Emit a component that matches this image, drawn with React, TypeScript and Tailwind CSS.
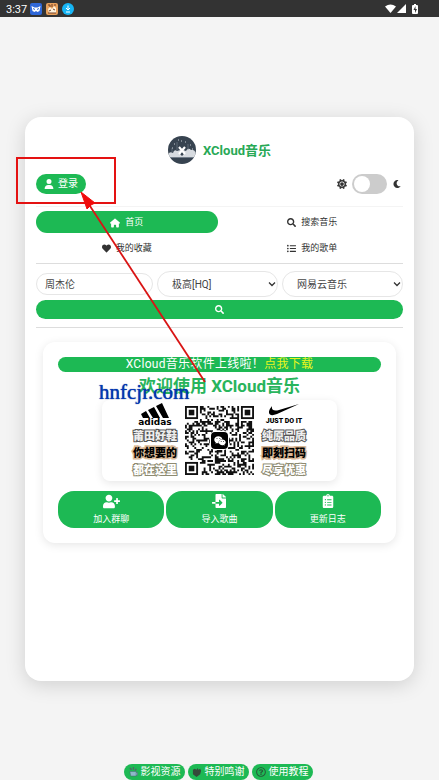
import React, { useState } from "react";
import {
  FaMoon, FaSearch, FaHeart, FaListUl,
  FaUserPlus, FaFileImport, FaClipboardList, FaRegQuestionCircle, FaWeixin,
} from "react-icons/fa";
import { FaHouse, FaUser, FaSun } from "react-icons/fa6";

const SIZE = 37;

function inFinder(x: number, y: number) {
  return (x < 8 && y < 8) || (x >= SIZE - 8 && y < 8) || (x < 8 && y >= SIZE - 8);
}

function qrPath() {
  let d = "";
  let seed = 91;
  for (let y = 0; y < SIZE; y++) {
    for (let x = 0; x < SIZE; x++) {
      seed = (seed * 1103515245 + 12345) % 2147483648;
      if (!inFinder(x, y) && (seed >> 12) % 100 < 46) d += `M${x} ${y}h1v1h-1z`;
    }
  }
  return d;
}

function QrCode() {
  const corners = [[0, 0], [SIZE - 7, 0], [0, SIZE - 7]];
  return (
    <div className="grid shrink-0 place-items-center">
      <svg viewBox="0 0 37 37" className="col-start-1 row-start-1 size-[69px]" role="img" aria-label="QR">
        <path d={qrPath()} fill="#111" />
        {corners.map(([x, y]) => (
          <g key={`${x}-${y}`}>
            <rect x={x + 0.5} y={y + 0.5} width="6" height="6" fill="#fff" stroke="#111" />
            <rect x={x + 2} y={y + 2} width="3" height="3" fill="#111" />
          </g>
        ))}
      </svg>
      <span className="col-start-1 row-start-1 grid size-[17px] place-items-center rounded-sm bg-black text-white ring-1 ring-white">
        <FaWeixin size={12} />
      </span>
    </div>
  );
}

function Slogans({ lines }: { lines: string[] }) {
  return (
    <div className="flex flex-col items-center pt-px text-[11px] leading-[17px] font-black">
      <span className="text-[#eee] [-webkit-text-stroke:2px_#555] [paint-order:stroke_fill]">{lines[0]}</span>
      <span className="text-black [-webkit-text-stroke:3px_#d9b896] [paint-order:stroke_fill]">{lines[1]}</span>
      <span className="text-white [-webkit-text-stroke:2px_#8d8a70] [paint-order:stroke_fill]">{lines[2]}</span>
    </div>
  );
}

function StatusBar() {
  return (
    <header className="flex h-[17px] items-center bg-[#333] pr-5 pl-1.5 text-white">
      <span className="w-6 pt-0.5 text-[11px] leading-4">3:37</span>
      <svg viewBox="0 0 12 12" className="size-3">
        <rect width="12" height="12" rx="2" fill="#2f67d8" />
        <path d="M1.5 3l3 1.5h3l3-1.5-1 5-2 1-1.5-1-1.5 1-2-1z" fill="#fff" />
        <path d="M3 5.5l2 1M9 5.5l-2 1" stroke="#2f67d8" />
      </svg>
      <svg viewBox="0 0 12 12" className="ml-1 size-3">
        <rect width="12" height="12" rx="2" fill="#e8a15c" />
        <path d="M2 6l2-2 2 2 2-3 2 2v5H3z" fill="#fff3dd" />
        <path d="M2 2h2v2M6 1v3M8 2h2M3 8l2-1M7 6l2 1M2 10h8" stroke="#754127" fill="none" />
      </svg>
      <svg viewBox="0 0 12 12" className="ml-1 size-3">
        <circle cx="6" cy="6" r="6" fill="#16b5f5" />
        <path d="M6 2.5v4M4 5l2 2 2-2M4 9h4" stroke="#fff" fill="none" />
      </svg>
      <svg viewBox="0 0 34 10" className="ml-auto h-2.5 w-[34px]" fill="#fff">
        <path d="M0 2.5Q5.5-1.5 11 2.5L5.500 9z" />
        <path d="M21 0v9h-9z" />
        <path d="M28 1h1V0h2v1h1q1 0 1 1v7q0 1-1 1h-4q-1 0-1-1V2q0-1 1-1z" />
        <path d="M30.500 2L28.500 6H30v3l2-4h-1.500z" fill="#333" />
      </svg>
    </header>
  );
}

function Logo() {
  return (
    <svg viewBox="0 0 28 28" className="size-7">
      <defs><clipPath id="disc"><circle cx="14" cy="14" r="14" /></clipPath></defs>
      <g clipPath="url(#disc)">
        <rect width="28" height="28" fill="#374350" />
        <path d="M0 18q2-3 5-1 1-4 4-2 5-2 9 0 2-4 5-1 3-1 5 3v4H0z" fill="#d7dbe0" />
        <path d="M0 21.500h28" stroke="#8e98a3" strokeWidth=".7" />
        <path d="M9 6v8M20 8v6M4 12v4" stroke="#7a8591" strokeWidth=".6" />
        <path d="M6 8h1M13 5h1M17 6h1M22 9h1M24 13h1M10 4h1M4 12h1" stroke="#c7ccd2" />
        <path d="M12 18l2-3 2 3-2 2z" fill="#374350" />
        <path d="M11 11l6 7M17 11l-6 7" stroke="#fff" strokeWidth="2.200" />
      </g>
    </svg>
  );
}

const tabs = [
  { label: "首页", icon: <FaHouse size={10} /> },
  { label: "搜索音乐", icon: <FaSearch size={9} /> },
  { label: "我的收藏", icon: <FaHeart size={9} /> },
  { label: "我的歌单", icon: <FaListUl size={9} /> },
];

const actions = [
  { label: "加入群聊", icon: <FaUserPlus size={17} /> },
  { label: "导入歌曲", icon: <FaFileImport size={14} /> },
  { label: "更新日志", icon: <FaClipboardList size={14} /> },
];

function Picker({ label, options }: { label: string; options: string[] }) {
  return (
    <div className="grid items-center">
      <select aria-label={label} className="col-start-1 row-start-1 h-[26px] w-full appearance-none rounded-full border border-[#e6e6e6] bg-white pl-3.5 text-[10px] text-[#444] outline-none">
        {options.map((o) => <option key={o}>{o}</option>)}
      </select>
      <svg viewBox="0 0 8 8" className="pointer-events-none col-start-1 row-start-1 mr-0.5 size-2 justify-self-end">
        <path d="M1 2.500l3 3 3-3" fill="none" stroke="#333" strokeWidth="1.300" />
      </svg>
    </div>
  );
}

export default function App() {
  const [active, setActive] = useState(0);
  const [dark, setDark] = useState(false);
  return (
    <div lang="zh-CN" className="relative flex min-h-screen flex-col overflow-hidden bg-[#f4f4f4] font-[Roboto,'Noto_Sans_CJK_SC',sans-serif] text-[#333]">
      <StatusBar />
      <main className="mx-[25px] mt-[100px] mb-[83px] flex-1 rounded-2xl bg-white px-[11px] pt-[19px] shadow-[0_4px_20px_rgba(0,0,0,0.15)]">
        <div className="flex items-center justify-center gap-[7px]">
          <Logo />
          <h1 className="pt-px text-[13px] font-bold text-[#28a956]">XCloud音乐</h1>
        </div>
        <div className="mt-2.5 flex h-5 items-center justify-between">
          <button className="flex h-5 items-center gap-1 rounded-full bg-[#1db954] px-2 text-[10px] leading-4 text-white">
            <FaUser size={10} />登录
          </button>
          <div className="flex items-center gap-[5px] pr-0.5">
            <FaSun size={10} />
            <label className="flex cursor-pointer">
              <input type="checkbox" aria-label="夜间模式" className="peer sr-only" checked={dark} onChange={() => setDark(!dark)} />
              <span className="flex h-5 w-[35px] items-center rounded-full bg-[#ccc] px-0.5 before:size-4 before:rounded-full before:bg-white peer-checked:justify-end peer-checked:bg-[#1db954]" />
            </label>
            <FaMoon size={8} className="ml-px" />
          </div>
        </div>
        <nav className="mt-3 grid grid-cols-2 gap-x-1 gap-y-1 border-t border-[#f4f4f4] border-b border-b-[#ddd] pt-1 pb-1">
          {tabs.map((t, i) => (
            <button
              key={t.label}
              onClick={() => setActive(i)}
              className={`flex h-[22px] items-center justify-center gap-[5px] rounded-full pt-px text-[9px] ${i === active ? "bg-[#1db954] text-white" : "text-[#333]"}`}
            >
              {t.icon}{t.label}
            </button>
          ))}
        </nav>
        <form className="mt-[7px] border-b border-[#ddd] pb-2" onSubmit={(e) => e.preventDefault()}>
          <div className="grid grid-cols-[117fr_121fr_121fr] items-center gap-1">
            <input aria-label="搜索" defaultValue="周杰伦" className="h-[22px] w-full rounded-full border border-[#e6e6e6] px-2 pb-0.5 text-[10px] text-[#444] outline-none" />
            <Picker label="音质" options={["极高[HQ]", "无损[SQ]"]} />
            <Picker label="来源" options={["网易云音乐", "QQ音乐"]} />
          </div>
          <button aria-label="搜索" className="mt-[3px] flex h-[19px] w-full items-center justify-center rounded-full bg-[#1db954] text-white">
            <FaSearch size={9} />
          </button>
        </form>
        <section className="mx-[7px] mt-3.5 rounded-xl bg-white p-[15px] shadow-[0_2px_10px_rgba(0,0,0,0.1)]">
          <p className="rounded-full bg-[#1db954] text-center text-[12px] leading-[15px] tracking-wide text-white">
            XCloud音乐软件上线啦！<a href="#download" className="text-[#e9f51c]">点我下载</a>
          </p>
          <h2 className="mt-0.5 text-center text-[17px] leading-[25px] font-bold text-[#28b45c]">欢迎使用 XCloud音乐</h2>
          <div className="mx-11 mt-px flex h-[81px] items-center justify-center gap-2 rounded-lg bg-white shadow-[0_2px_8px_rgba(0,0,0,0.1)]">
            <div className="flex flex-col items-center">
              <svg viewBox="0 0 28 15" className="h-[15px] w-7" fill="#000">
                <path d="M0 11l5-3 4 7H2zM7 7l6-3 6 11h-7zM15 3l6-3 7 15h-6z" />
              </svg>
              <span className="font-['DejaVu_Sans',sans-serif] text-[9px] leading-[9px] font-bold text-black">adidas</span>
              <Slogans lines={["莆田好鞋", "你想要的", "都在这里"]} />
            </div>
            <QrCode />
            <div className="flex flex-col items-center">
              <svg viewBox="0 0 30 13" className="h-[13px] w-[30px]" fill="#000">
                <path d="M3 3Q-2 9 1 11.500 3 13 8 11L30 1 10 7Q2 9 3 3z" />
              </svg>
              <span className="font-['Roboto',sans-serif] text-[7px] leading-[11px] font-black text-black">JUST DO IT</span>
              <Slogans lines={["纯原品质", "即刻扫码", "尽享优惠"]} />
            </div>
          </div>
          <div className="mt-2.5 grid grid-cols-3 gap-0.5">
            {actions.map((a) => (
              <button key={a.label} className="flex h-[37px] flex-col items-center justify-center gap-[3px] rounded-2xl bg-[#1db954] text-[9px] leading-[14px] text-white">
                <span className="flex h-[15px] items-center">{a.icon}</span>
                {a.label}
              </button>
            ))}
          </div>
        </section>
      </main>
      <footer className="flex justify-center gap-[3px] pr-[3px] text-[10px] leading-4 text-white">
        <a href="#video" className="flex items-center gap-[3px] rounded-full bg-[#1db954] px-1">
          <svg viewBox="0 0 11 11" className="size-2.5">
            <path d="M2 5h7v5H3zM9 6h1.500v3H9" fill="#8db9c9" stroke="#496b77" strokeWidth=".6" />
            <path d="M2 1l2 2M6 0v3M9 2L8 4" stroke="#53646a" strokeWidth="1.500" />
          </svg>
          影视资源
        </a>
        <a href="#thanks" className="flex items-center gap-[3px] rounded-full bg-[#1db954] px-1">
          <svg viewBox="0 0 11 11" className="size-2.5" fill="#354b3a">
            <path d="M1 3l2-1 2 1 1-2 1 2 2-1 1 2-1 4-4 3-4-3z" />
          </svg>
          特别鸣谢
        </a>
        <a href="#help" className="flex items-center gap-[3px] rounded-full bg-[#1db954] px-1">
          <FaRegQuestionCircle size={10} className="text-[#28583a]" />使用教程
        </a>
      </footer>
      <div className="pointer-events-none absolute top-[157px] left-4 h-[47px] w-[100px] border-2 border-[#e41212]" />
      <svg className="pointer-events-none absolute top-0 left-0 h-[400px] w-[220px]" viewBox="0 0 220 400">
        <path d="M205 382L88 203" stroke="#d91414" strokeWidth="1.800" />
        <path d="M81 192L95 203 91 205 87 209z" fill="#f00c0c" stroke="#f00c0c" />
      </svg>
      <span className="pointer-events-none absolute top-[380px] left-[99px] font-['Liberation_Serif',serif] text-[21px] leading-6 text-[#0038b8] [text-shadow:0_0_1px_#001a70]">hnfcjr.com</span>
    </div>
  );
}
